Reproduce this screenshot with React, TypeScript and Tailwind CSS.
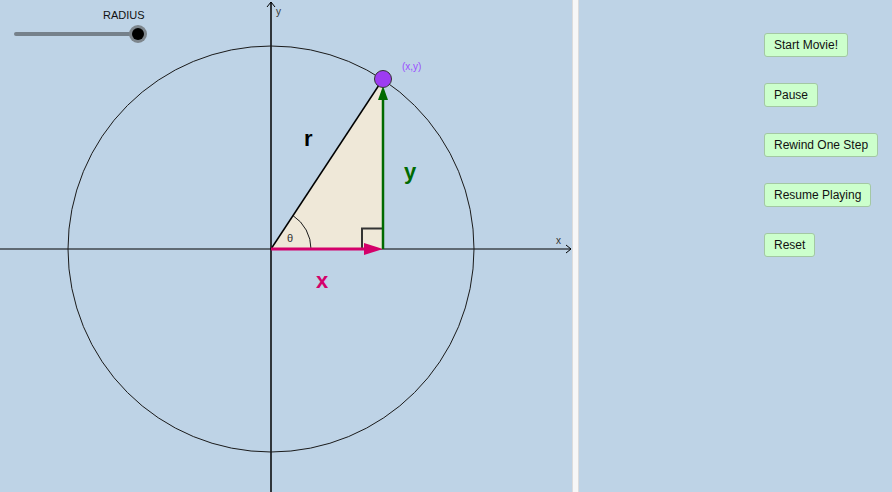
import React from "react";

const buttons = ["Start Movie!", "Pause", "Rewind One Step", "Resume Playing", "Reset"];

function Graph() {
  const ox = 271;
  const oy = 249;
  const px = 383;
  const py = 79;
  const theta = Math.atan2(oy - py, px - ox);
  const ar = 40;
  const ax = ox + ar * Math.cos(theta);
  const ay = oy - ar * Math.sin(theta);

  return (
    <svg width="572" height="492" className="block" style={{ fontFamily: "'Liberation Sans', Arial, sans-serif" }}>
      {/* axes */}
      <line x1="0" y1={oy} x2="571" y2={oy} stroke="#000" strokeWidth="1" />
      <polyline points="566,245 571,249 566,253" fill="none" stroke="#000" strokeWidth="1" />
      <line x1={ox} y1="2" x2={ox} y2="492" stroke="#000" strokeWidth="1.5" />
      <polyline points="267,7 271,2 275,7" fill="none" stroke="#000" strokeWidth="1" />
      <text x="276" y="15" fontSize="10" fill="#333">y</text>
      <text x="556" y="244" fontSize="10" fill="#333">x</text>

      {/* circle */}
      <circle cx={ox} cy={oy} r="203" fill="none" stroke="#1a1a1a" strokeWidth="1" />

      {/* triangle */}
      <polygon points={`${ox},${oy} ${px},${py} ${px},${oy}`} fill="#efe8d8" />
      <path d={`M ${ox} ${oy} L ${ox + ar} ${oy} A ${ar} ${ar} 0 0 0 ${ax} ${ay} Z`} fill="#efe8d8" />
      <path d={`M ${ox + ar} ${oy} A ${ar} ${ar} 0 0 0 ${ax} ${ay}`} fill="none" stroke="#1a1a1a" strokeWidth="1" />
      <text x="287" y="242" fontSize="11" fill="#333">θ</text>
      <polyline points="362,249 362,228.5 383,228.5" fill="none" stroke="#333" strokeWidth="2" />

      {/* hypotenuse */}
      <line x1={ox} y1={oy} x2={px} y2={py} stroke="#000" strokeWidth="1.5" />

      {/* x vector */}
      <line x1={ox} y1={oy} x2="366" y2={oy} stroke="#d4006a" strokeWidth="3" />
      <polygon points="364,243 383,249 364,255" fill="#d4006a" />

      {/* y vector */}
      <line x1={px} y1={oy} x2={px} y2="98" stroke="#006a00" strokeWidth="2.5" />
      <polygon points="378,100 383,86 388,100" fill="#006a00" />

      {/* point */}
      <circle cx={px} cy={py} r="8.5" fill="#9d3cf2" stroke="#333" strokeWidth="1" />
      <text x="402" y="70" fontSize="10" fill="#9a4dff">(x,y)</text>

      <text x="304" y="146" fontSize="22" fontWeight="bold" fill="#000">r</text>
      <text x="404" y="179" fontSize="22" fontWeight="bold" fill="#006a00">y</text>
      <text x="316" y="288" fontSize="22" fontWeight="bold" fill="#d4006a">x</text>
    </svg>
  );
}

export default function App() {
  return (
    <div
      className="flex w-[892px] h-[492px] overflow-hidden bg-[#bed3e6]"
      style={{ fontFamily: "'Liberation Sans', Arial, sans-serif" }}
    >
      <div className="relative w-[572px] h-full shrink-0">
        <Graph />
        <div className="absolute left-[12px] top-[8px] w-[140px] h-[40px]">
          <div className="absolute left-[91px] top-0 text-[11px] leading-[14px] text-[#111]">RADIUS</div>
          <div className="absolute left-[2px] top-[24px] w-[126px] h-[4px] rounded-full bg-[#76818b]" />
          <div className="absolute left-[117px] top-[17px] w-[18px] h-[18px] rounded-full bg-[#7d858c] flex items-center justify-center">
            <div className="w-[12px] h-[12px] rounded-full bg-black" />
          </div>
        </div>
      </div>
      <div className="w-[7px] h-full shrink-0 bg-[#f7f7f7] border-x border-[#dcdcdc]" />
      <div className="flex-1 h-full pl-[185px] pt-[33px] flex flex-col items-start gap-[26px]">
        {buttons.map((b) => (
          <button
            key={b}
            className="h-[24px] px-[9px] rounded-[3px] border border-[#a3c8a3] bg-[#ccffcc] text-[12px] text-[#111] leading-none whitespace-nowrap"
          >
            {b}
          </button>
        ))}
      </div>
    </div>
  );
}
